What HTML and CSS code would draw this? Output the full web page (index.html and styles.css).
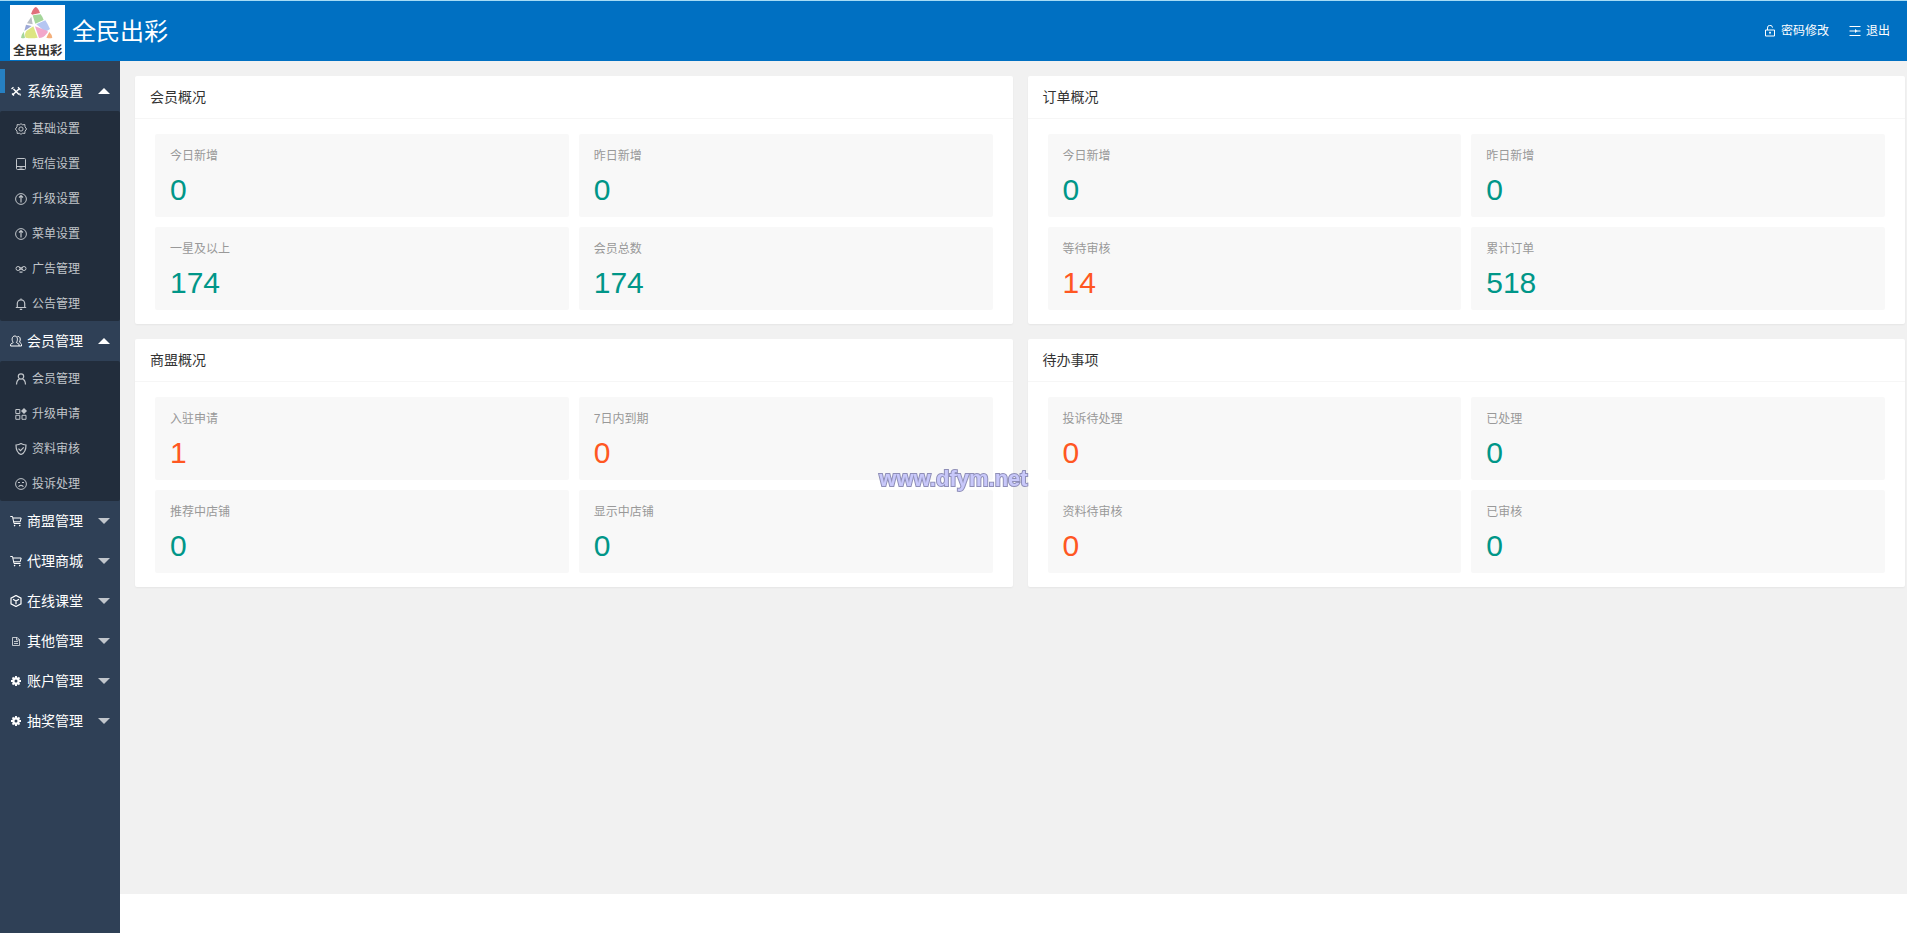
FILE: index.html
```html
<!DOCTYPE html>
<html lang="zh-CN">
<head>
    <meta charset="UTF-8">
    <meta name="viewport" content="width=device-width, initial-scale=1.0">
    <title>全民出彩</title>
    <link rel="stylesheet" href="styles.css">
</head>
<body>
    <!-- 图标 -->
    <svg class="sprite" aria-hidden="true">
        <symbol id="i-tools" viewBox="0 0 12 12"><path d="M3.500 4l5.500 5.500M9 4l-6.500 6" stroke-width="1.500"/><path d="M1.500 4l2-1.700M8 2.300L10.500 5M2 8.500l2 2M9.500 8.500l1 2" stroke-width="1.300"/></symbol>
        <symbol id="i-gear" viewBox="0 0 12 12"><circle cx="6" cy="6" r="2.100"/><path d="M6 .5l1.300 1.400 2.500-.4.200 2.300L11.600 6 10 8.200l-.2 2.300-2.500-.4L6 11.500l-1.300-1.400-2.500.4L2 8.200.4 6 2 3.800l.2-2.300 2.500.4z"/></symbol>
        <symbol id="i-phone" viewBox="0 0 12 12"><rect x="1.500" y=".5" width="9" height="11" rx="1"/><path d="M1.500 8.500h9M4.500 10h3"/></symbol>
        <symbol id="i-up" viewBox="0 0 12 12"><circle cx="6" cy="6" r="5.400"/><path d="M6 9.500v-7M4 4.500l2-2 2 2" stroke-width="1.200"/></symbol>
        <symbol id="i-link" viewBox="0 0 12 12"><circle cx="3" cy="5.500" r="2"/><circle cx="9" cy="5.500" r="2"/><path d="M4.300 4l3.400 3M4.300 7l3.400-3M4.500 8.700q1.500 1 3 0" stroke-width="1.200"/></symbol>
        <symbol id="i-bell" viewBox="0 0 12 12"><path d="M.8 9.500h10.400M2.300 9.500V5.500a3.700 3.700 0 0 1 7.400 0v4M6 1.800V.5M4.800 11.300h2.400" stroke-width="1.200"/></symbol>
        <symbol id="i-users" viewBox="0 0 12 12"><path d="M.6 11v-1.500c0-1 2.200-1.200 2.600-2C1.300 5 2 1 4.800 1s3.400 4 1.600 6.500c.4.800 2.600 1 2.600 2V11zM7.500 1.500c2.700-.5 3.500 3 2 5.500.3.900 2 1.200 2 2.500V11H9"/></symbol>
        <symbol id="i-user" viewBox="0 0 12 12"><g stroke-width="1.200"><circle cx="6" cy="3.500" r="2.700"/><path d="M1.500 11.500c.2-3 1.500-5 3-5.300M10.500 11.500c-.2-3-1.500-5-3-5.300"/></g></symbol>
        <symbol id="i-apps" viewBox="0 0 12 12"><path d="M.8 1.500h4v4h-4zM.8 7.300h4v4h-4zM7 7.300h4v4H7z"/><path class="solid" d="M9 0l3 3-3 3-3-3z"/></symbol>
        <symbol id="i-shield" viewBox="0 0 12 12"><g stroke-width="1.200"><path d="M6 .6c1.500 1 3.200 1.300 5 1.400C11 6.500 10 10 6 11.500 2 10 1 6.500 1 2 2.800 1.900 4.500 1.600 6 .6z"/><path d="M3.500 5.700l2 2 3.200-3.400"/></g></symbol>
        <symbol id="i-sad" viewBox="0 0 12 12"><circle cx="6" cy="6" r="5.400"/><path d="M3 4.500h2M7 4.500h2M3.600 8.800c1-2 3.800-2 4.800 0" stroke-width="1.200"/></symbol>
        <symbol id="i-cart" viewBox="0 0 12 12"><path d="M.3 1.500h2.200l1.500 7h6.500M2.900 3h8.300l-1 3.800H3.700"/><circle class="solid" cx="4.600" cy="10.600" r=".8"/><circle class="solid" cx="9.800" cy="10.600" r=".8"/></symbol>
        <symbol id="i-cube" viewBox="0 0 12 12"><path d="M6 .5l5 2.700v5.600L6 11.500 1 8.800V3.200zM3 4.300L6 6l3-1.700M6 6v3.300" stroke-width="1.200"/></symbol>
        <symbol id="i-file" viewBox="0 0 12 12"><path d="M2.500 2.500H7l2.500 2V10.500h-7zM6.500 2.500V5h3M4 6.500h4M4 8.500h4" opacity=".7"/></symbol>
        <symbol id="i-cog" viewBox="0 0 12 12"><circle cx="6" cy="6" r="2.600" stroke-width="2.200"/><path d="M6 1v2M6 9v2M1 6h2M9 6h2M2.500 2.500l1.400 1.400M8.100 8.100l1.400 1.400M2.500 9.500l1.400-1.400M8.100 3.900l1.400-1.400" stroke-width="1.900"/></symbol>
        <symbol id="i-lock" viewBox="0 0 12 12"><path d="M1.500 5h9v6h-9zM3.500 5V3a2.500 2.500 0 0 1 5-.4M6 7v2.200M5 7.300h2"/></symbol>
        <symbol id="i-exit" viewBox="0 0 12 12"><path d="M.5 1.500h11M.5 10.500h11M.5 6H6M8 6h3.500" stroke-width="1.200"/><path class="solid" d="M6 4l2.600 2L6 8z"/></symbol>
    </svg>

    <header class="header">
        <a class="brand" href="#">
            <svg class="logo" viewBox="0 0 165 165" role="img" aria-label="全民出彩">
                <rect width="165" height="165" fill="#fff"/>
                <path d="M64 25q6-17 13-19 7 1 13 18l-24 5z" fill="#e0707c"/>
                <path d="M68 31l24-3q6 8 9 17L76 56z" fill="#a5d69a"/>
                <path d="M64 35l4 23-17-3z" fill="#b9bec4"/>
                <path d="M79 58l27-12q8 12 14 26-10 9-18 5z" fill="#b5c6f2"/>
                <path d="M48 59l17 4-22 15z" fill="#9da9d6"/>
                <path d="M70 64l13 34q-20 4-36 0-5-10 2-20z" fill="#dde582"/>
                <path d="M75 64l38 14q2 4-4 9-8 12-22 12z" fill="#f2a7cb"/>
                <path d="M41 80l4 18q-6 3-12 0 2-10 8-18z" fill="#a5d69a"/>
                <path d="M118 81q8 8 9 17-6 3-18 0z" fill="#f4b07c"/>
                <text class="logo-text" x="9" y="149">全民出彩</text>
            </svg>
            <span class="brand-name">全民出彩</span>
        </a>
        <nav class="tools">
            <a href="#"><svg class="icon"><use href="#i-lock"/></svg>密码修改</a>
            <a href="#"><svg class="icon"><use href="#i-exit"/></svg>退出</a>
        </nav>
    </header>

    <div class="layout">
        <aside class="side">
            <span class="side-bar"></span>
            <ul class="nav">
                <li class="open">
                    <a class="parent" href="#"><svg class="icon"><use href="#i-tools"/></svg>系统设置<i class="caret"></i></a>
                    <ul class="sub">
                        <li><a href="#"><svg class="icon"><use href="#i-gear"/></svg>基础设置</a></li>
                        <li><a href="#"><svg class="icon"><use href="#i-phone"/></svg>短信设置</a></li>
                        <li><a href="#"><svg class="icon"><use href="#i-up"/></svg>升级设置</a></li>
                        <li><a href="#"><svg class="icon"><use href="#i-up"/></svg>菜单设置</a></li>
                        <li><a href="#"><svg class="icon"><use href="#i-link"/></svg>广告管理</a></li>
                        <li><a href="#"><svg class="icon"><use href="#i-bell"/></svg>公告管理</a></li>
                    </ul>
                </li>
                <li class="open">
                    <a class="parent" href="#"><svg class="icon"><use href="#i-users"/></svg>会员管理<i class="caret"></i></a>
                    <ul class="sub">
                        <li><a href="#"><svg class="icon"><use href="#i-user"/></svg>会员管理</a></li>
                        <li><a href="#"><svg class="icon"><use href="#i-apps"/></svg>升级申请</a></li>
                        <li><a href="#"><svg class="icon"><use href="#i-shield"/></svg>资料审核</a></li>
                        <li><a href="#"><svg class="icon"><use href="#i-sad"/></svg>投诉处理</a></li>
                    </ul>
                </li>
                <li><a class="parent" href="#"><svg class="icon"><use href="#i-cart"/></svg>商盟管理<i class="caret"></i></a></li>
                <li><a class="parent" href="#"><svg class="icon"><use href="#i-cart"/></svg>代理商城<i class="caret"></i></a></li>
                <li><a class="parent" href="#"><svg class="icon"><use href="#i-cube"/></svg>在线课堂<i class="caret"></i></a></li>
                <li><a class="parent" href="#"><svg class="icon"><use href="#i-file"/></svg>其他管理<i class="caret"></i></a></li>
                <li><a class="parent" href="#"><svg class="icon"><use href="#i-cog"/></svg>账户管理<i class="caret"></i></a></li>
                <li><a class="parent" href="#"><svg class="icon"><use href="#i-cog"/></svg>抽奖管理<i class="caret"></i></a></li>
            </ul>
        </aside>

        <div class="body">
            <main class="cards">
                <section class="card">
                    <h2>会员概况</h2>
                    <div class="tiles">
                        <a class="tile" href="#"><h3>今日新增</h3><p>0</p></a>
                        <a class="tile" href="#"><h3>昨日新增</h3><p>0</p></a>
                        <a class="tile" href="#"><h3>一星及以上</h3><p>174</p></a>
                        <a class="tile" href="#"><h3>会员总数</h3><p>174</p></a>
                    </div>
                </section>
                <section class="card">
                    <h2>订单概况</h2>
                    <div class="tiles">
                        <a class="tile" href="#"><h3>今日新增</h3><p>0</p></a>
                        <a class="tile" href="#"><h3>昨日新增</h3><p>0</p></a>
                        <a class="tile" href="#"><h3>等待审核</h3><p class="warn">14</p></a>
                        <a class="tile" href="#"><h3>累计订单</h3><p>518</p></a>
                    </div>
                </section>
                <section class="card">
                    <h2>商盟概况</h2>
                    <div class="tiles">
                        <a class="tile" href="#"><h3>入驻申请</h3><p class="warn">1</p></a>
                        <a class="tile" href="#"><h3>7日内到期</h3><p class="warn">0</p></a>
                        <a class="tile" href="#"><h3>推荐中店铺</h3><p>0</p></a>
                        <a class="tile" href="#"><h3>显示中店铺</h3><p>0</p></a>
                    </div>
                </section>
                <section class="card">
                    <h2>待办事项</h2>
                    <div class="tiles">
                        <a class="tile" href="#"><h3>投诉待处理</h3><p class="warn">0</p></a>
                        <a class="tile" href="#"><h3>已处理</h3><p>0</p></a>
                        <a class="tile" href="#"><h3>资料待审核</h3><p class="warn">0</p></a>
                        <a class="tile" href="#"><h3>已审核</h3><p>0</p></a>
                    </div>
                </section>
            </main>
            <footer class="footer"></footer>
        </div>
    </div>

    <div class="watermark">www.dfym.net</div>
</body>
</html>
```
FILE: styles.css
```css
* {
    box-sizing: border-box;
}

body {
    display: flex;
    flex-direction: column;
    min-height: 100vh;
    margin: 0;
    font: 14px/24px "Liberation Sans", "Noto Sans CJK SC", sans-serif;
    color: #333;
    background: #fff;
}

a {
    color: inherit;
    text-decoration: none;
}

ul {
    margin: 0;
    padding: 0;
    list-style: none;
}

h2, h3, p {
    margin: 0;
    font-weight: normal;
}

.sprite {
    position: absolute;
    width: 0;
    height: 0;
}

.icon {
    flex: none;
    width: 12px;
    height: 12px;
    margin-right: 5px;
    fill: none;
    stroke: currentColor;
    stroke-width: 1;
}

.solid {
    fill: currentColor;
    stroke: none;
}

/* 顶部 */
.header {
    display: flex;
    justify-content: space-between;
    align-items: center;
    height: 61px;
    padding: 0 17px 0 10px;
    border-top: 1px solid #a6dcf5;
    background: #0070c2;
    color: #fff;
}

.brand {
    display: flex;
    align-items: center;
    padding-top: 3px;
}

.logo {
    width: 55px;
    height: 55px;
    margin-right: 7px;
}

.logo-text {
    font-size: 37px;
    font-weight: bold;
    fill: #333;
}

.brand-name {
    padding-bottom: 2px;
    font-size: 24px;
}

.tools {
    display: flex;
    gap: 20px;
    font-size: 12px;
}

.tools a {
    display: flex;
    align-items: center;
}

.layout {
    display: flex;
    flex: 1;
}

/* 左侧菜单 */
.side {
    position: relative;
    flex: none;
    width: 120px;
    padding-top: 10px;
    background: #2f4056;
    color: #fff;
}

.side-bar {
    position: absolute;
    top: 8px;
    left: 0;
    width: 5px;
    height: 24px;
    background: #2680c2;
}

.parent {
    display: flex;
    align-items: center;
    height: 40px;
    padding: 0 10px;
}

.sub {
    border-radius: 2px;
    background: #222d3c;
    color: #c1c5ca;
    font-size: 12px;
}

.sub a {
    display: flex;
    align-items: center;
    height: 35px;
    padding-left: 15px;
}

.caret {
    margin-left: auto;
    border: 6px solid transparent;
    border-top-color: #c1c6cc;
    border-bottom-width: 0;
}

.open .caret {
    border-top-width: 0;
    border-bottom: 6px solid #fff;
}

/* 内容 */
.body {
    display: flex;
    flex: 1;
    flex-direction: column;
}

.cards {
    display: grid;
    flex: 1;
    grid-template-columns: 1fr 1fr;
    align-content: start;
    gap: 15px;
    padding: 15px 2px 15px 15px;
    background: #f1f1f1;
}

.card {
    border-radius: 2px;
    background: #fff;
    box-shadow: 0 1px 2px rgba(0, 0, 0, 0.05);
}

.card h2 {
    padding: 0 15px;
    border-bottom: 1px solid #f6f6f6;
    font-size: 14px;
    line-height: 42px;
}

.tiles {
    display: grid;
    grid-template-columns: 1fr 1fr;
    gap: 10px;
    padding: 15px 20px 14px;
}

.tile {
    padding: 10px 15px 12px;
    border-radius: 2px;
    background: #f8f8f8;
}

.tile h3 {
    margin-bottom: 7px;
    color: #999;
    font-size: 12px;
    line-height: 24px;
}

.tile p {
    color: #009688;
    font-size: 30px;
    line-height: 30px;
}

.tile .warn {
    color: #ff5722;
}

.footer {
    height: 39px;
    background: #fff;
}

.watermark {
    position: fixed;
    top: 50%;
    left: 50%;
    transform: translateX(-50%);
    color: #c8c8fa;
    font-size: 22px;
    font-weight: bold;
    pointer-events: none;
    -webkit-text-stroke: 2px #8f8fb8;
    paint-order: stroke fill;
}
```
